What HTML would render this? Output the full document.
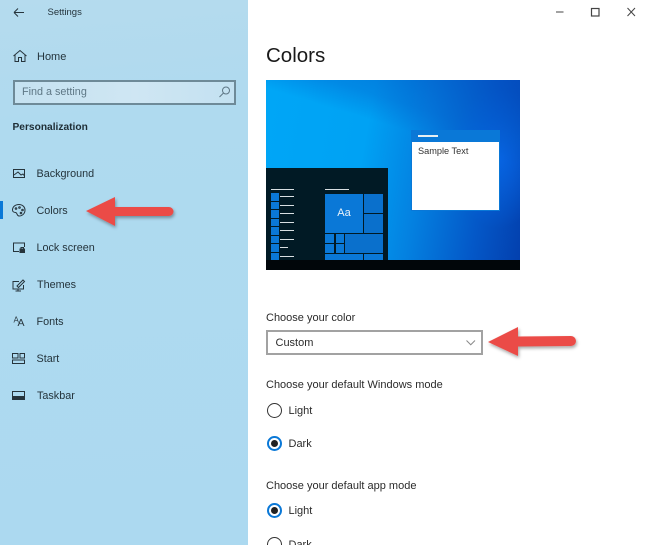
<!DOCTYPE html>
<html>
<head>
<meta charset="utf-8">
<style>
html,body{margin:0;padding:0;width:648px;height:545px;overflow:hidden;background:#fff}
body{position:relative;font-family:"Liberation Sans",sans-serif;color:#222}
#r{position:absolute;left:0;top:0;width:648px;height:545px;overflow:hidden;filter:blur(.3px)}
div{position:absolute;box-sizing:border-box}
.t{white-space:nowrap;font-size:10.8px;line-height:14px;color:#24343c}
.c{color:#2b2b2b;font-size:11px}
.w{background:#d8dfe2;height:1.4px}
.b{background:#0a78d7}
.d{background:#0a70cc}
svg{position:absolute;overflow:visible}
</style>
</head>
<body>
<div id="r">
<div style="left:0;top:0;width:248px;height:545px;background:linear-gradient(175deg,#b5dbee 0,#afdaef 22%,#acd9f0 100%)"></div>

<svg style="left:0;top:0" width="248" height="420" fill="none" stroke="#26343c" stroke-width="1">
<path d="M14 12.500H24M14 12.500L18 8.500M14 12.500L18 16.500"/>
<path d="M13.500 56L20 50.500L26.500 56M15 55V61.500H18.500V57.500H21.500V61.500H25V55"/>
<path d="M13.500 169.500H24.500V177.500H13.500ZM14 175L18 172L21 175L23 174L24.500 176"/>
<path d="M19 204.500C15 204.500 12.500 207 12.500 210C12.500 212 14.500 212.500 15.500 212.500C17.500 212.500 16.500 216 19 216C22.500 216 25 213.500 25 210C25 207 22.500 204.500 19 204.500Z"/>
<circle cx="16" cy="208.500" r=".8"/><circle cx="19.500" cy="207.500" r=".8"/><circle cx="22.500" cy="210" r=".8"/><circle cx="21" cy="213" r=".8"/>
<path d="M19 251.500H13.500V243H24.500V247"/>
<rect x="20" y="249" width="4.500" height="3.500" fill="#26343c"/>
<path d="M21 249V247.500H23.500V249"/>
<path d="M19 281.500H13V289H23.500V285M15.500 291H21M18 289V291M17 286L23 280L24.500 281.500L18.500 287.500Z"/>
<text x="13.500" y="322.500" font-size="8" fill="#26343c" stroke="none" font-family="Liberation Sans">A</text>
<text x="17.500" y="326" font-size="10.500" fill="#26343c" stroke="none" font-family="Liberation Sans">A</text>
<path d="M12.500 353.500H18V358H12.500ZM20 353.500H24.500V358H20ZM12.500 360H24.500V363.500H12.500Z"/>
<path d="M12.500 391.500H24.500V399.500H12.500Z"/>
<rect x="12.500" y="396.500" width="12" height="3" fill="#26343c"/>
</svg>

<div class="t" style="left:47.500px;top:5.500px;font-size:9.500px;">Settings</div>
<div class="t" style="left:37px;top:49.500px;font-size:11px">Home</div>
<div style="left:12.500px;top:79.500px;width:223px;height:25px;border:2px solid #6e8a98;background:linear-gradient(90deg,#c5e2f1,#cfe6f3 55%,#c3e1f1)"></div>
<div class="t" style="left:22px;top:85px;color:#5e7785">Find a setting</div>
<svg style="left:218px;top:85px" width="14" height="14" fill="none" stroke="#5e7785"><circle cx="8" cy="5.500" r="3.500"/><path d="M5.500 8L1.500 12"/></svg>
<div class="t" style="left:12.500px;top:121px;font-weight:bold;color:#1e2d35;font-size:10.200px">Personalization</div>

<div class="t" style="left:36.500px;top:167px">Background</div>
<div style="left:0;top:201px;width:3px;height:18px;background:#0a78d7"></div>
<div class="t" style="left:36.500px;top:204px">Colors</div>
<div class="t" style="left:36.500px;top:241px">Lock screen</div>
<div class="t" style="left:37px;top:278px">Themes</div>
<div class="t" style="left:36.500px;top:315px">Fonts</div>
<div class="t" style="left:36.500px;top:352px">Start</div>
<div class="t" style="left:37px;top:389px">Taskbar</div>

<svg style="left:0;top:0" width="648" height="30" fill="none" stroke="#444"><path d="M556 12H563.500"/><rect x="591.500" y="8.500" width="7.500" height="7.500" stroke-width="1.200"/><path d="M627.500 8L635 16M635 8L627.500 16"/></svg>

<div class="t" style="left:266px;top:41.500px;font-size:20.500px;line-height:28px;color:#1a1a1a">Colors</div>

<!-- preview -->
<div style="left:266px;top:79.500px;width:254px;height:190px;overflow:hidden;background:linear-gradient(100deg,#00a6f6 0,#00a2f4 38%,#0480e0 60%,#0458c8 82%,#033fad 100%)">
  <div style="left:0;top:0;width:254px;height:190px;background:radial-gradient(ellipse 50px 70px at 232px 78px,rgba(8,105,235,.8),rgba(8,105,235,0))"></div>
  <div style="left:0;top:0;width:254px;height:190px;background:linear-gradient(197deg,rgba(3,75,190,.55) 0,rgba(3,90,200,.35) 22%,rgba(3,90,200,0) 32%)"></div>
  <!-- sample window -->
  <div style="left:145px;top:50.500px;width:89px;height:81px;background:#0a78d7"></div>
  <div style="left:146px;top:62px;width:87px;height:68.500px;background:#fff"></div>
  <div style="left:152px;top:64.500px;font-size:9.200px;line-height:14px;color:#333;white-space:nowrap">Sample Text</div>
  <div style="left:151.500px;top:55.500px;width:20px;height:1.500px;background:#e8eef2"></div>
  <!-- start -->
  <div style="left:0;top:88px;width:122px;height:92px;background:#011a25"></div>
  <div style="left:0;top:180.500px;width:254px;height:9.500px;background:#01060a"></div>
  <div class="w" style="left:5px;top:109.500px;width:23px"></div>
  <div class="w" style="left:59px;top:109.500px;width:23.500px"></div>

  <div class="b" style="left:5px;top:113.500px;width:8px;height:7.500px"></div>
  <div class="b" style="left:5px;top:122px;width:8px;height:7.500px"></div>
  <div class="b" style="left:5px;top:130.700px;width:8px;height:7.500px"></div>
  <div class="b" style="left:5px;top:139px;width:8px;height:7.500px"></div>
  <div class="b" style="left:5px;top:147.500px;width:8px;height:7.500px"></div>
  <div class="b" style="left:5px;top:156px;width:8px;height:7.500px"></div>
  <div class="b" style="left:5px;top:164.500px;width:8px;height:7.500px"></div>
  <div class="b" style="left:5px;top:173px;width:8px;height:7.500px"></div>

  <div class="w" style="left:14px;top:116.500px;width:13.500px"></div>
  <div class="w" style="left:14px;top:125px;width:13.500px"></div>
  <div class="w" style="left:14px;top:133.500px;width:13.500px"></div>
  <div class="w" style="left:14px;top:142px;width:13.500px"></div>
  <div class="w" style="left:14px;top:150.500px;width:13.500px"></div>
  <div class="w" style="left:14px;top:159px;width:13.500px"></div>
  <div class="w" style="left:14px;top:167.500px;width:8px"></div>
  <div class="w" style="left:14px;top:176px;width:13.500px"></div>

  <div class="b" style="left:59px;top:114.500px;width:38px;height:38.500px"></div>
  <div style="left:59px;top:126px;width:38px;text-align:center;color:#e8f2fa;font-size:11px;line-height:14px">Aa</div>
  <div class="d" style="left:98px;top:114.500px;width:18.500px;height:19px"></div>
  <div class="d" style="left:98px;top:134.500px;width:18.500px;height:18.500px"></div>
  <div class="b" style="left:59px;top:154px;width:9px;height:9.500px"></div>
  <div class="b" style="left:69.500px;top:154px;width:8px;height:9.500px"></div>
  <div class="b" style="left:59px;top:164.500px;width:9px;height:9px"></div>
  <div class="b" style="left:69.500px;top:164.500px;width:8px;height:9px"></div>
  <div class="d" style="left:79px;top:154px;width:37.500px;height:19.500px"></div>
  <div class="b" style="left:59px;top:174.500px;width:38px;height:6px"></div>
  <div class="b" style="left:98px;top:174.500px;width:18.500px;height:6px"></div>
</div>

<div class="t c" style="left:266px;top:310.500px">Choose your color</div>
<div style="left:266px;top:330px;width:217px;height:25px;border:2px solid #a2a2a2;background:#fff"></div>
<div class="t c" style="left:275.500px;top:336px">Custom</div>
<svg style="left:466px;top:339.500px" width="10" height="7" fill="none" stroke="#8a8a8a"><path d="M.5 .5L4.750 4.750L9 .5"/></svg>

<div class="t c" style="left:266px;top:377.500px">Choose your default Windows mode</div>
<div style="left:266.500px;top:402.500px;width:15px;height:15px;border:1.500px solid #333;border-radius:50%"></div>
<div class="t c" style="left:288.500px;top:403.500px">Light</div>
<div style="left:266.500px;top:436px;width:15px;height:15px;border:2px solid #0a78d7;border-radius:50%"></div>
<div style="left:270.500px;top:440px;width:7px;height:7px;background:#222;border-radius:50%"></div>
<div class="t c" style="left:288.500px;top:437px">Dark</div>

<div class="t c" style="left:266px;top:478.500px">Choose your default app mode</div>
<div style="left:266.500px;top:502.500px;width:15px;height:15px;border:2px solid #0a78d7;border-radius:50%"></div>
<div style="left:270.500px;top:506.500px;width:7px;height:7px;background:#222;border-radius:50%"></div>
<div class="t c" style="left:288.500px;top:503.500px">Light</div>
<div style="left:266.500px;top:536.500px;width:15px;height:15px;border:1.500px solid #333;border-radius:50%"></div>
<div class="t c" style="left:288.500px;top:537.500px">Dark</div>

<!-- arrows -->
<svg style="left:0;top:0" width="648" height="545">
<defs><filter id="s" x="-20%" y="-40%" width="140%" height="180%"><feDropShadow dx="1" dy="2" stdDeviation="1.500" flood-color="#000" flood-opacity=".35"/></filter></defs>
<path d="M86 211L115 197V207L169 207A4.500 4.500 0 0 1 169 216L115 216V226Z" fill="#eb4c46" filter="url(#s)"/>
<path d="M488 342L518 327V336.500L571 336A5 5 0 0 1 571 346L518 346.500V356Z" fill="#eb4c46" filter="url(#s)"/>
</svg>
</div>
</body>
</html>
